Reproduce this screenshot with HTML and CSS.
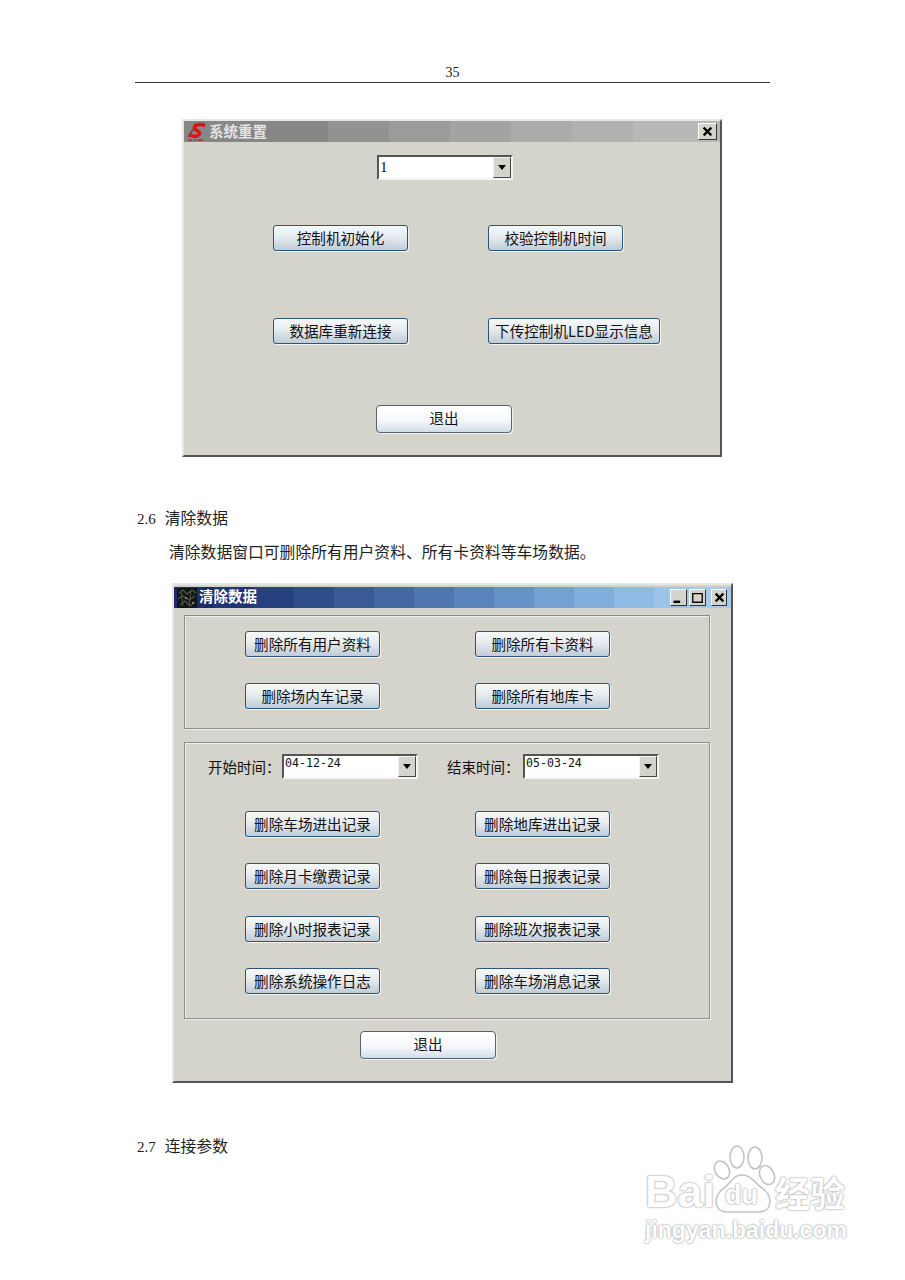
FILE: index.html
```html
<!DOCTYPE html>
<html lang="zh-CN">
<head>
    <meta charset="UTF-8">
    <title>系统重置 / 清除数据</title>
    <link rel="stylesheet" href="styles.css">
</head>
<body>
    <div class="page">
        <div class="page-header">35</div>

        <!-- 系统重置 -->
        <div class="window window-reset">
            <div class="titlebar titlebar-gray">
                <svg class="title-icon" viewBox="0 0 20 20">
                    <path d="M1 15 L7 6 L9 2" fill="none" stroke="#8a3a3a" stroke-width="1.6"/>
                    <path d="M18 3.5 C11 1 6 3.5 8 7 C10 9.5 14 9.5 12 12.5 C10 15 6 14.5 3 13" fill="none" stroke="#e01212" stroke-width="3.6"/>
                    <rect x="1" y="17" width="4" height="2" fill="#b04040"/>
                    <rect x="6" y="17" width="4" height="2" fill="#7a6a6a"/>
                    <rect x="11" y="17" width="5" height="2" fill="#b04040"/>
                </svg>
                <span class="title-text title-soft">系统重置</span>
                <div class="title-controls">
                    <span class="ctl ctl-big">
                        <svg viewBox="0 0 10 10"><path d="M1.5 1.5 L8.5 8.5 M8.5 1.5 L1.5 8.5" stroke="#000" stroke-width="2"/></svg>
                    </span>
                </div>
            </div>
            <div class="reset-body">
                <div class="combo combo-reset">
                    <span class="combo-value combo-serif">1</span>
                    <span class="combo-arrow"></span>
                </div>
                <div class="reset-grid">
                    <button class="btn">控制机初始化</button>
                    <button class="btn">校验控制机时间</button>
                    <button class="btn">数据库重新连接</button>
                    <button class="btn btn-wide">下传控制机LED显示信息</button>
                </div>
                <button class="btn btn-exit reset-exit">退出</button>
            </div>
        </div>

        <h2 class="section section-26"><span class="section-no">2.6</span>清除数据</h2>
        <p class="para">清除数据窗口可删除所有用户资料、所有卡资料等车场数据。</p>

        <!-- 清除数据 -->
        <div class="window window-clear">
            <div class="titlebar titlebar-blue">
                <svg class="title-icon" viewBox="0 0 20 20">
                    <rect width="20" height="20" fill="#12161c"/>
                    <path d="M2 5 L6 2 L10 6 L15 2 L19 5 M1 11 L6 8 L12 12 L18 8 M3 17 L8 13 L13 18 L18 14" fill="none" stroke="#4a5a44" stroke-width="1.3"/>
                    <path d="M4 3 L6 18 M14 2 L12 18" stroke="#5f5536" stroke-width="1"/>
                    <rect x="8" y="9" width="2" height="2" fill="#8a8440"/>
                    <rect x="15" y="14" width="2" height="2" fill="#8a8440"/>
                </svg>
                <span class="title-text">清除数据</span>
                <div class="title-controls controls-clear">
                    <span class="ctl"><svg viewBox="0 0 10 10"><path d="M0.5 9 H6.5" stroke="#000" stroke-width="2.4"/></svg></span>
                    <span class="ctl ctl-gap"><svg viewBox="0 0 10 10"><path d="M0.5 1.5 H9.5 M0.7 1 V9.3 H9.3 V1" fill="none" stroke="#000" stroke-width="1.2"/></svg></span>
                    <span class="ctl ctl-gap ctl-close"><svg viewBox="0 0 10 10"><path d="M1.5 1.5 L8.5 8.5 M8.5 1.5 L1.5 8.5" stroke="#000" stroke-width="2"/></svg></span>
                </div>
            </div>

            <div class="group group-top">
                <div class="btn-grid">
                    <button class="btn">删除所有用户资料</button>
                    <button class="btn">删除所有卡资料</button>
                    <button class="btn">删除场内车记录</button>
                    <button class="btn">删除所有地库卡</button>
                </div>
            </div>

            <div class="group group-bottom">
                <div class="date-row">
                    <span class="date-label">开始时间：</span>
                    <div class="combo"><span class="combo-value">04-12-24</span><span class="combo-arrow"></span></div>
                    <span class="date-label date-label-end">结束时间：</span>
                    <div class="combo"><span class="combo-value">05-03-24</span><span class="combo-arrow"></span></div>
                </div>
                <div class="btn-grid">
                    <button class="btn">删除车场进出记录</button>
                    <button class="btn">删除地库进出记录</button>
                    <button class="btn">删除月卡缴费记录</button>
                    <button class="btn">删除每日报表记录</button>
                    <button class="btn">删除小时报表记录</button>
                    <button class="btn">删除班次报表记录</button>
                    <button class="btn">删除系统操作日志</button>
                    <button class="btn">删除车场消息记录</button>
                </div>
            </div>

            <button class="btn btn-exit clear-exit">退出</button>
        </div>

        <h2 class="section section-27"><span class="section-no">2.7</span>连接参数</h2>

        <!-- watermark -->
        <div class="watermark">
            <svg class="wm-paw" viewBox="0 0 80 75">
                <g fill="#fff" stroke="#c4c4c4" stroke-width="1.6">
                    <ellipse cx="15" cy="25" rx="7" ry="9.5" transform="rotate(-30 15 25)"/>
                    <ellipse cx="30" cy="12" rx="7" ry="11"/>
                    <ellipse cx="48" cy="13" rx="7" ry="11"/>
                    <ellipse cx="60" cy="30" rx="7" ry="10" transform="rotate(-25 60 30)"/>
                    <path d="M35 30 C26 30 24 38 17 43 C6 50 6 67 20 67 H52 C66 67 66 50 55 43 C48 38 44 30 35 30 Z"/>
                </g>
            </svg>
            <span class="wm-bai">Bai</span>
            <span class="wm-du">du</span>
            <span class="wm-jy">经验</span>
            <div class="wm-url">jingyan.baidu.com</div>
        </div>
    </div>
</body>
</html>
```

FILE: styles.css
```css
/* General Page Styling */
body {
    margin: 0;
    padding: 0;
    background-color: white;
    color: #222;
    font-family: "Liberation Serif", "Noto Sans CJK SC", serif;
}

.page {
    position: relative;
    width: 905px;
    height: 1280px;
    overflow: hidden;
}

/* Page number and rule */
.page-header {
    margin: 0 135px;
    height: 83px;
    box-sizing: border-box;
    padding-top: 65px;
    border-bottom: 1px solid #333;
    text-align: center;
    font-size: 14px;
    line-height: 16px;
}

/* Windows */
.window {
    box-sizing: border-box;
    background-color: #d4d3cc;
    border: 2px solid;
    border-color: #e6e6e2 #555 #555 #e6e6e2;
}
.window-reset {
    width: 540px;
    height: 338px;
    margin: 36px 0 0 182px;
}
.window-clear {
    width: 561px;
    height: 500px;
    margin: 20px 0 0 172px;
    padding-top: 2px;
}

/* Title bars */
.titlebar {
    display: flex;
    align-items: center;
    height: 21px;
    padding: 0 2px 0 3px;
}
.titlebar-gray {
    background: linear-gradient(90deg,
        #878787 0 144px, #929292 144px 205px, #9b9b9b 205px 266px,
        #a3a3a3 266px 327px, #ababab 327px 388px, #b1b1b1 388px 449px, #b8b8b8 449px);
}
.titlebar-blue {
    background: linear-gradient(90deg,
        #1b2b6b 0 40px, #203574 40px 80px, #27407f 80px 120px, #2f4c8b 120px 160px,
        #395a97 160px 200px, #4468a4 200px 240px, #4f76b0 240px 280px, #5b84bc 280px 320px,
        #6792c7 320px 360px, #74a0d2 360px 400px, #81aedc 400px 440px, #8fbae5 440px 480px,
        #9cc4ea 480px 520px, #a6caee 520px);
}
.title-icon {
    width: 20px;
    height: 20px;
    flex-shrink: 0;
}
.title-text {
    margin-left: 2px;
    padding-bottom: 4px;
    font-family: "Noto Sans CJK SC", sans-serif;
    font-size: 14.5px;
    font-weight: bold;
    line-height: 17px;
    color: white;
}
.title-soft {
    padding-bottom: 2px;
    color: #e4e4e4;
}
.title-controls {
    display: flex;
    margin-left: auto;
}
.controls-clear {
    margin-right: 2px;
}
.ctl {
    box-sizing: border-box;
    display: flex;
    align-items: center;
    justify-content: center;
    width: 17px;
    height: 17px;
    background-color: #d4d3cc;
    border: 1px solid;
    border-color: #fff #333 #333 #fff;
}
.ctl svg {
    width: 11px;
    height: 11px;
}
.ctl-big {
    width: 19px;
    margin-right: 1px;
}
.ctl-gap {
    margin-left: 2px;
}
.ctl-close {
    width: 16px;
    margin-left: 5px;
}

/* Buttons */
.btn {
    box-sizing: border-box;
    height: 26px;
    width: 135px;
    padding: 0;
    border: 1px solid #2c5578;
    border-radius: 3px;
    background: linear-gradient(180deg, #f6f8f9 0%, #e9edf0 40%, #bfccd8 100%);
    box-shadow: 1px 1px 0 #f2f2ee;
    font-family: "Noto Sans CJK SC", sans-serif;
    font-size: 14.6px;
    line-height: 22px;
    color: #111;
}
.btn-wide {
    width: 172px;
}
.btn-exit {
    width: 136px;
    height: 28px;
    padding-bottom: 3px;
    border-color: #56656f;
    border-radius: 4px;
    background: linear-gradient(180deg, #fff 0%, #f6f8fc 55%, #d3dde8 100%);
}

/* Combo boxes */
.combo {
    box-sizing: border-box;
    display: flex;
    width: 136px;
    height: 25px;
    background-color: white;
    border: 2px solid;
    border-color: #555 #f4f4f0 #f4f4f0 #555;
}
.combo-value {
    flex: 1;
    padding-left: 1px;
    font-family: "DejaVu Sans Mono", monospace;
    font-size: 11.6px;
    line-height: 15px;
    color: #111;
}
.combo-serif {
    font-family: "Liberation Serif", serif;
    font-size: 15px;
    line-height: 21px;
}
.combo-arrow {
    position: relative;
    box-sizing: border-box;
    width: 18px;
    background-color: #d4d3cc;
    border: 1px solid;
    border-color: #f4f4f0 #444 #444 #f4f4f0;
}
/* little triangle on the combo button */
.combo-arrow::after {
    content: "";
    position: absolute;
    left: 4px;
    top: 7px;
    border-style: solid;
    border-width: 5px 4px 0 4px;
    border-color: #000 transparent transparent transparent;
}

/* 系统重置 body */
.reset-body {
    display: flex;
    flex-direction: column;
}
.combo-reset {
    margin: 13px 0 0 193px;
}
.reset-grid {
    display: grid;
    grid-template-columns: 215px auto;
    row-gap: 67px;
    justify-items: start;
    margin: 45px 0 0 89px;
}
.reset-exit {
    margin: 61px 0 0 192px;
}

/* 清除数据 groups */
.group {
    box-sizing: border-box;
    width: 526px;
    margin-left: 10px;
    border: 1px solid #8d8d88;
    box-shadow: inset 1px 1px 0 #efefea, 1px 1px 0 #efefea;
}
.group-top {
    height: 114px;
    margin-top: 7px;
    padding: 15px 0 0 60px;
}
.group-bottom {
    height: 277px;
    margin-top: 13px;
    padding: 10px 0 0 60px;
}
.btn-grid {
    display: grid;
    grid-template-columns: 230px auto;
    row-gap: 26.3px;
    justify-items: start;
}
.date-row {
    display: flex;
    align-items: center;
    height: 26px;
    margin: 0 0 32px -37px;
}
.date-label {
    width: 74px;
    font-family: "Noto Sans CJK SC", sans-serif;
    font-size: 14.5px;
    color: #111;
}
.date-label-end {
    width: 76px;
    margin-left: 29px;
}
.clear-exit {
    display: block;
    margin: 12px 0 0 186px;
}

/* Document text */
.section {
    margin: 0 0 0 137px;
    font-size: 15.8px;
    font-weight: normal;
    line-height: 20px;
}
.section-no {
    margin-right: 9px;
    font-size: 15px;
}
.section-26 {
    margin-top: 52px;
}
.section-27 {
    margin-top: 54px;
}
.para {
    margin: 14px 0 0 169px;
    font-size: 15.8px;
    line-height: 20px;
}

/* Baidu watermark */
.watermark {
    position: absolute;
    left: 645px;
    top: 1145px;
    width: 210px;
    height: 105px;
    color: white;
    font-family: "Liberation Sans", sans-serif;
    font-weight: bold;
}
.wm-paw {
    position: absolute;
    left: 62px;
    top: 0;
    width: 80px;
    height: 75px;
}
.wm-bai, .wm-du, .wm-jy, .wm-url {
    position: absolute;
    text-shadow: 0 0 2px #a8a8a8, 0 0 2px #a8a8a8;
    white-space: nowrap;
}
.wm-bai {
    left: 0;
    top: 24px;
    font-size: 45px;
    line-height: 46px;
}
.wm-du {
    left: 80px;
    top: 35px;
    font-size: 27px;
    line-height: 30px;
}
.wm-jy {
    left: 130px;
    top: 27px;
    font-family: "Noto Sans CJK SC", sans-serif;
    font-size: 35px;
    line-height: 40px;
}
.wm-url {
    left: 0;
    top: 70px;
    font-size: 23px;
    line-height: 30px;
}
```
